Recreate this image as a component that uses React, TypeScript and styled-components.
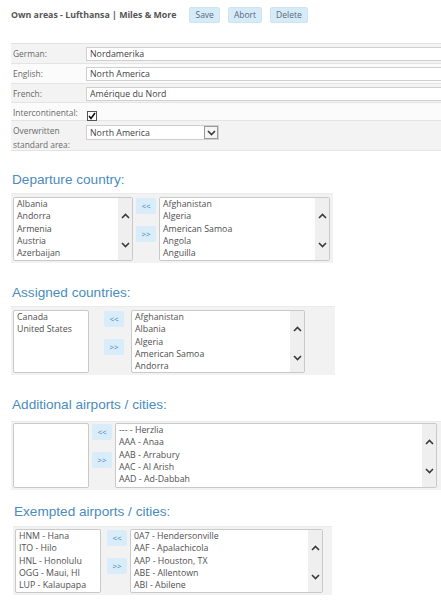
import React from "react";
import styled, { createGlobalStyle } from "styled-components";

const GlobalStyle = createGlobalStyle`
  html, body {
    margin: 0;
    padding: 0;
    background: #ffffff;
  }
  body {
    font-family: "Open Sans", "Liberation Sans", sans-serif;
    color: #555555;
  }
`;

const Page = styled.div`
  width: 441px;
  height: 600px;
  overflow: hidden;
  box-sizing: border-box;
  padding: 7px 0 0 11px;
`;

const Header = styled.div`
  display: flex;
  align-items: center;
  height: 16px;
`;

const Title = styled.div`
  font-weight: 700;
  font-size: 8.8px;
  color: #555555;
  white-space: nowrap;
  margin-right: 13px;
`;

const ActionButton = styled.button`
  font-family: inherit;
  font-size: 8.5px;
  color: #5a6a7a;
  background: #d6ebf8;
  border: 1px solid #cde4f3;
  border-radius: 2px;
  height: 16px;
  line-height: 14px;
  padding: 0 5px;
  margin-right: 8px;
`;

const FormTable = styled.div`
  margin-top: 20px;
  width: 440px;
  border-top: 1px solid #e2e2e2;
`;

const FormRow = styled.div<{ $shade: boolean; $height: number }>`
  display: grid;
  grid-template-columns: 75px 1fr;
  align-items: start;
  height: ${(p) => p.$height}px;
  box-sizing: border-box;
  padding-top: 3px;
  background: ${(p) => (p.$shade ? "#f3f3f3" : "#fbfbfb")};
  border-bottom: 1px solid #e4e4e4;
`;

const Label = styled.div`
  font-size: 8.4px;
  line-height: 14px;
  color: #6a6a6a;
  padding-left: 2px;
  white-space: nowrap;
`;

const TextInput = styled.input`
  font-family: inherit;
  font-size: 8.8px;
  color: #444444;
  height: 14px;
  width: 100%;
  box-sizing: border-box;
  border: 1px solid #cfcfcf;
  background: #ffffff;
  padding: 0 3px;
  outline: none;
`;

const CheckBox = styled.span`
  display: inline-flex;
  align-items: center;
  justify-content: center;
  width: 8px;
  height: 8px;
  margin: 5px 0 0 1px;
  border: 1px solid #555555;
  background: #ffffff;
`;

const SelectBox = styled.div`
  display: flex;
  align-items: center;
  justify-content: space-between;
  width: 133px;
  height: 15px;
  box-sizing: border-box;
  border: 1px solid #cfcfcf;
  background: #ffffff;
  font-size: 8.8px;
  color: #444444;
  padding-left: 3px;
  margin-top: 1px;
`;

const SelectArrow = styled.span`
  display: flex;
  align-items: center;
  justify-content: center;
  width: 14px;
  height: 13px;
  box-sizing: border-box;
  border: 1px solid #9a9a9a;
  background: #f4f4f4;
`;

const Heading = styled.h2<{ $top: number; $gap: number; $indent: number }>`
  margin: ${(p) => p.$top}px 0 ${(p) => p.$gap}px ${(p) => p.$indent}px;
  font-family: "Liberation Sans", Arial, sans-serif;
  font-weight: 400;
  font-size: 13.6px;
  line-height: 16px;
  color: #4a8cbd;
`;

const Panel = styled.div<{ $width: number; $padTop: number; $indent: number }>`
  display: flex;
  align-items: flex-start;
  width: ${(p) => p.$width}px;
  margin-left: ${(p) => p.$indent}px;
  box-sizing: border-box;
  padding: ${(p) => p.$padTop}px 0 2px 2px;
  background: #f2f2f2;
  border-top: 1px solid #ebebeb;
`;

const ListBox = styled.div<{ $width: number; $height: number }>`
  display: flex;
  width: ${(p) => p.$width}px;
  height: ${(p) => p.$height}px;
  box-sizing: border-box;
  border: 1px solid #c9c9c9;
  border-radius: 2px;
  background: #ffffff;
  overflow: hidden;
  flex-shrink: 0;
`;

const Items = styled.div`
  flex: 1;
  padding: 0 3px;
  overflow: hidden;
`;

const Item = styled.div`
  font-size: 8.8px;
  line-height: 12.3px;
  color: #505050;
  white-space: nowrap;
`;

const ScrollTrack = styled.div`
  width: 14px;
  display: flex;
  flex-direction: column;
  align-items: center;
  gap: 23px;
  padding-top: 15px;
  background: #efefef;
`;

const TransferColumn = styled.div<{ $gapBefore: number; $gapAfter: number }>`
  display: flex;
  flex-direction: column;
  gap: 12px;
  padding-top: 1px;
  margin: 0 ${(p) => p.$gapAfter}px 0 ${(p) => p.$gapBefore}px;
`;

const TransferButton = styled.button`
  width: 20px;
  height: 16px;
  padding: 0;
  border: none;
  border-radius: 2px;
  background: #d8ecf9;
  color: #3f7fae;
  font-family: inherit;
  font-size: 8px;
  line-height: 16px;
`;

const Chevron = ({ up }: { up?: boolean }) => (
  <svg width="9" height="6" viewBox="0 0 9 6">
    <polyline
      points={up ? "1,5 4.5,1.5 8,5" : "1,1 4.5,4.5 8,1"}
      fill="none"
      stroke="#3a3a3a"
      strokeWidth="1.6"
    />
  </svg>
);

const List = ({
  items,
  width,
  height,
  scroll
}: {
  items: string[];
  width: number;
  height: number;
  scroll?: boolean;
}) => (
  <ListBox $width={width} $height={height}>
    <Items>
      {items.map((i) => (
        <Item key={i}>{i}</Item>
      ))}
    </Items>
    {scroll && (
      <ScrollTrack>
        <Chevron up />
        <Chevron />
      </ScrollTrack>
    )}
  </ListBox>
);

interface Layout {
  top: number;
  gap: number;
  indent: number;
  panel: number;
  padTop: number;
  listHeight: number;
  left: number;
  gapA: number;
  gapB: number;
  right: number;
  leftScroll: boolean;
}

const Section = ({
  title,
  left,
  right,
  layout
}: {
  title: string;
  left: string[];
  right: string[];
  layout: Layout;
}) => (
  <section>
    <Heading $top={layout.top} $gap={layout.gap} $indent={layout.indent + 1}>
      {title}
    </Heading>
    <Panel $width={layout.panel} $padTop={layout.padTop} $indent={layout.indent}>
      <List
        items={left}
        width={layout.left}
        height={layout.listHeight}
        scroll={layout.leftScroll}
      />
      <TransferColumn $gapBefore={layout.gapA} $gapAfter={layout.gapB}>
        <TransferButton>&lt;&lt;</TransferButton>
        <TransferButton>&gt;&gt;</TransferButton>
      </TransferColumn>
      <List items={right} width={layout.right} height={layout.listHeight} scroll />
    </Panel>
  </section>
);

const sections = [
  {
    title: "Departure country:",
    left: ["Albania", "Andorra", "Armenia", "Austria", "Azerbaijan"],
    right: ["Afghanistan", "Algeria", "American Samoa", "Angola", "Anguilla"],
    layout: { top: 21, gap: 5, indent: 0, panel: 322, padTop: 3, listHeight: 64, left: 120, gapA: 3, gapB: 3, right: 171, leftScroll: true }
  },
  {
    title: "Assigned countries:",
    left: ["Canada", "United States"],
    right: ["Afghanistan", "Albania", "Algeria", "American Samoa", "Andorra"],
    layout: { top: 22, gap: 5, indent: 0, panel: 324, padTop: 3, listHeight: 63, left: 76, gapA: 15, gapB: 7, right: 174, leftScroll: false }
  },
  {
    title: "Additional airports / cities:",
    left: [],
    right: ["--- - Herzlia", "AAA - Anaa", "AAB - Arrabury", "AAC - Al Arish", "AAD - Ad-Dabbah"],
    layout: { top: 22, gap: 8, indent: 0, panel: 430, padTop: 1, listHeight: 65, left: 76, gapA: 3, gapB: 3, right: 322, leftScroll: false }
  },
  {
    title: "Exempted airports / cities:",
    left: ["HNM - Hana", "ITO - Hilo", "HNL - Honolulu", "OGG - Maui, HI", "LUP - Kalaupapa"],
    right: ["0A7 - Hendersonville", "AAF - Apalachicola", "AAP - Houston, TX", "ABE - Allentown", "ABI - Abilene"],
    layout: { top: 14, gap: 6, indent: 2, panel: 319, padTop: 2, listHeight: 64, left: 86, gapA: 6, gapB: 3, right: 193, leftScroll: false }
  }
];

export default function App() {
  return (
    <>
      <GlobalStyle />
      <Page>
        <Header>
          <Title>Own areas - Lufthansa | Miles &amp; More</Title>
          <ActionButton>Save</ActionButton>
          <ActionButton>Abort</ActionButton>
          <ActionButton>Delete</ActionButton>
        </Header>

        <FormTable>
          <FormRow $shade $height={20}>
            <Label>German:</Label>
            <TextInput readOnly defaultValue="Nordamerika" />
          </FormRow>
          <FormRow $shade={false} $height={20}>
            <Label>English:</Label>
            <TextInput readOnly defaultValue="North America" />
          </FormRow>
          <FormRow $shade $height={19}>
            <Label>French:</Label>
            <TextInput readOnly defaultValue="Amérique du Nord" />
          </FormRow>
          <FormRow $shade={false} $height={18}>
            <Label>Intercontinental:</Label>
            <CheckBox>
              <svg width="8" height="8" viewBox="0 0 8 8">
                <polyline points="1,4 3,6.5 7,1" fill="none" stroke="#111" strokeWidth="1.6" />
              </svg>
            </CheckBox>
          </FormRow>
          <FormRow $shade $height={30}>
            <Label>
              Overwritten
              <br />
              standard area:
            </Label>
            <SelectBox>
              North America
              <SelectArrow>
                <Chevron />
              </SelectArrow>
            </SelectBox>
          </FormRow>
        </FormTable>

        {sections.map((s) => (
          <Section key={s.title} title={s.title} left={s.left} right={s.right} layout={s.layout} />
        ))}
      </Page>
    </>
  );
}
